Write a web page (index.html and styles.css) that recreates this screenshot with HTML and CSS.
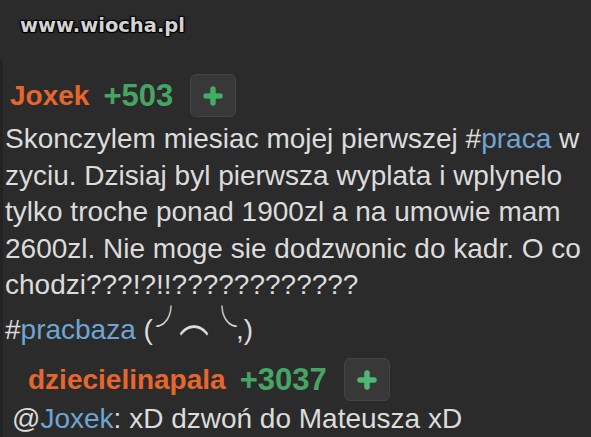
FILE: index.html
```html
<!DOCTYPE html>
<html lang="pl">
<head>
<meta charset="utf-8">
<title>wiocha</title>
<link rel="stylesheet" href="styles.css">
</head>
<body>
<div class="page">
  <div class="site">www.wiocha.pl</div>
  <div class="thread">
    <div class="comment">
      <div class="meta">
        <span class="user">Joxek</span>
        <span class="score">+503</span>
        <span class="plus"><svg viewBox="0 0 20 20" width="20" height="20"><path d="M10 3v14M3 10h14" stroke="#3fae63" stroke-width="5.5" stroke-linecap="round"/></svg></span>
      </div>
      <div class="text">Skonczylem miesiac mojej pierwszej #<span class="tag">praca</span> w<br>zyciu. Dzisiaj byl pierwsza wyplata i wplynelo<br>tylko troche ponad 1900zl a na umowie mam<br>2600zl. Nie moge sie dodzwonic do kadr. O co<br>chodzi???!?!!????????????<br><span class="last">#<span class="tag">pracbaza</span> (<span class="kao kao-l">╯</span><span class="kao-arc">︵</span><span class="kao">╰</span>,)</span></div>
    </div>
    <div class="comment reply">
      <div class="meta">
        <span class="user">dziecielinapala</span>
        <span class="score">+3037</span>
        <span class="plus"><svg viewBox="0 0 20 20" width="20" height="20"><path d="M10 3v14M3 10h14" stroke="#4fb774" stroke-width="5.5" stroke-linecap="round"/></svg></span>
      </div>
      <div class="text">@<span class="tag">Joxek</span>: xD dzwoń do Mateusza xD</div>
    </div>
  </div>
</div>
</body>
</html>
```
FILE: styles.css
```css
html, body {
  margin: 0;
  padding: 0;
  background: #2b2b2b;
}
.page {
  width: 591px;
  height: 437px;
  overflow: hidden;
  font-family: "Liberation Sans", Arial, sans-serif;
  color: #dcdcdc;
}
.site {
  height: 60px;
  padding: 14px 0 0 20px;
  box-sizing: border-box;
  font-family: "DejaVu Sans", sans-serif;
  font-weight: bold;
  font-size: 19.5px;
  color: #d2d2d2;
  text-shadow: 0 0 2px #000, 1px 1px 1px #000, -1px -1px 1px #000, 1px -1px 1px #000, -1px 1px 1px #000;
}
.thread {
  border-left: 3px solid #232323;
  padding-top: 14px;
}
.comment {
  padding-left: 2px;
}
.meta {
  display: flex;
  align-items: center;
  gap: 14px;
  height: 43px;
  padding-left: 5px;
}
.user {
  color: #e6662e;
  font-weight: bold;
  font-size: 28px;
}
.score {
  color: #47a564;
  font-weight: bold;
  font-size: 31px;
  margin-right: 3px;
}
.plus {
  width: 44px;
  height: 41px;
  border: 1px solid #444;
  border-radius: 6px;
  background: #383838;
  display: flex;
  align-items: center;
  justify-content: center;
}
.text {
  font-size: 28px;
  line-height: 36.5px;
  white-space: nowrap;
  margin-top: 4px;
}
.last {
  display: inline-block;
  margin-top: 2px;
}
.kao {
  display: inline-block;
  font-family: "Noto Sans CJK JP", sans-serif;
  font-weight: 400;
  font-size: 28px;
  vertical-align: 3px;
  transform: translateY(1px) scale(1.05, 1.45);
}
.kao-l {
  margin-left: 4px;
}
.kao-arc {
  display: inline-block;
  font-family: "Noto Sans CJK JP", sans-serif;
  font-weight: 400;
  transform: translateY(-10px) scale(1.05, 1.4);
  vertical-align: 2px;
  margin: 0 0 0 -5px;
}
.tag {
  color: #6ea5d4;
}
.reply {
  margin-top: 10px;
}
.reply .meta {
  padding-left: 23px;
}
.reply .text {
  padding-left: 7px;
  margin-top: 0;
}
```
